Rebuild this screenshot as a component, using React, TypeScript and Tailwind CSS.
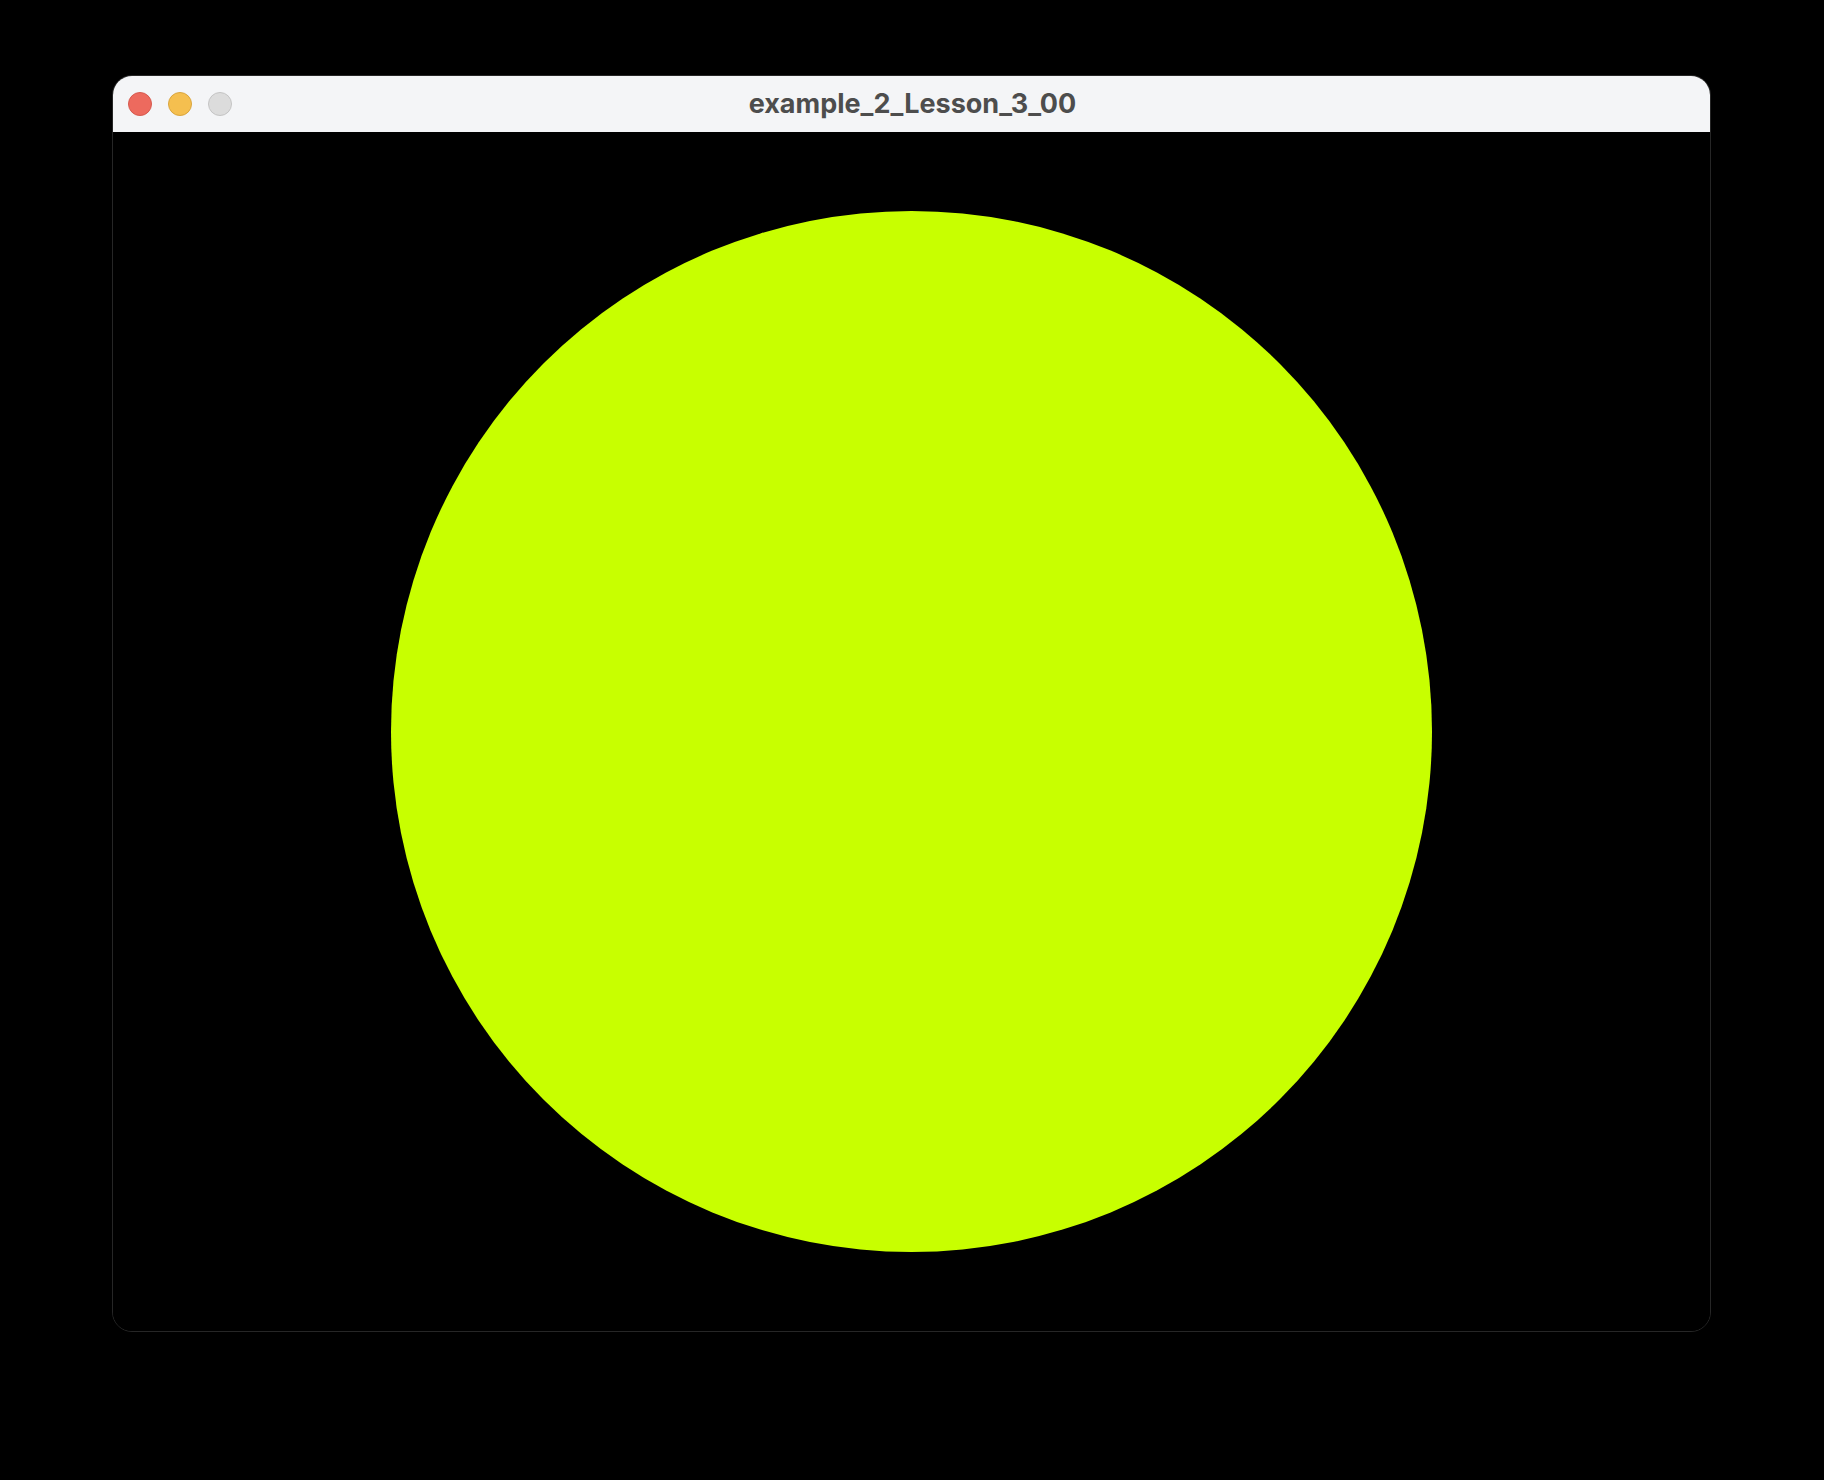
export default function App() {
  return (
    <div className="w-[1824px] h-[1480px] bg-black pt-[75px] pl-[112px]">
      <div className="w-[1599px] h-[1257px] rounded-[20px] overflow-hidden border border-[#262626] flex flex-col">
        <div className="relative h-[56px] bg-[#f4f5f7] flex items-center justify-center shrink-0">
          <div className="absolute left-[15px] top-[16px] flex gap-[16px]">
            <div className="w-[24px] h-[24px] rounded-full bg-[#ed6a5e] border border-[#d65a4f]" />
            <div className="w-[24px] h-[24px] rounded-full bg-[#f5bf4f] border border-[#d9a53e]" />
            <div className="w-[24px] h-[24px] rounded-full bg-[#dcdcdc] border border-[#c4c4c4]" />
          </div>
          <span className="text-[27px] leading-none font-bold text-[#4d4d4d] font-['Inter',sans-serif] -mt-[2px] ml-[2px]">
            example_2_Lesson_3_00
          </span>
        </div>
        <div className="flex-1 bg-black flex items-center justify-center">
          <div className="w-[1041px] h-[1041px] rounded-full bg-[#c8ff00]" />
        </div>
      </div>
    </div>
  );
}
